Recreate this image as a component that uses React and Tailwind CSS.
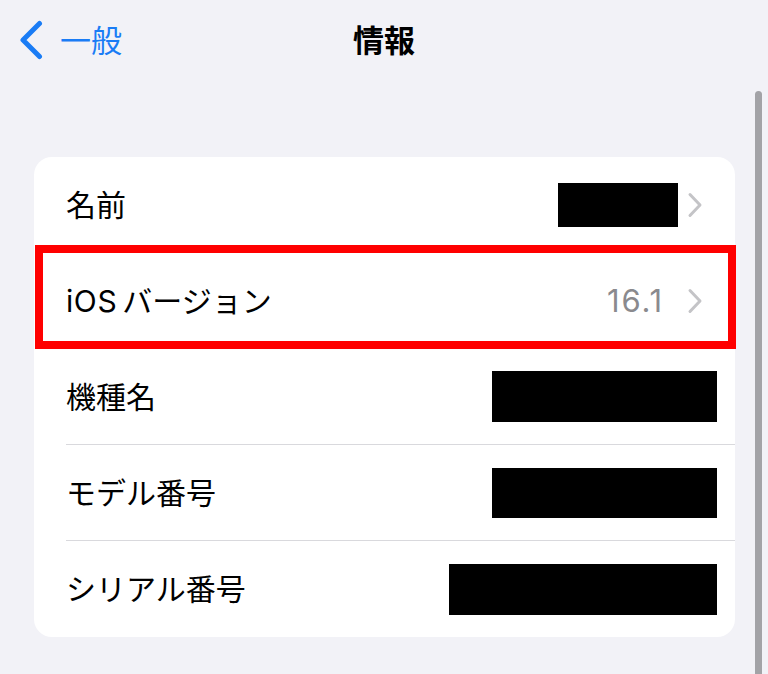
const font = { fontFamily: 'Inter, "Noto Sans CJK JP", sans-serif' };

function Chevron() {
  return (
    <svg width="16" height="26" viewBox="0 0 16 26" className="ml-[9px] mr-[14px] shrink-0">
      <path d="M3 2.5 L13 13 L3 23.5" fill="none" stroke="#c4c4c7" strokeWidth="3" strokeLinecap="round" strokeLinejoin="round" />
    </svg>
  );
}

function Row({ label, children, last }) {
  return (
    <div className="pl-8">
      <div className={"flex items-center h-[96px] pr-[18px] " + (last ? "" : "border-b border-[#d9d9dd]")}>
        <span className="text-[30px] leading-none text-black">{label}</span>
        <div className="ml-auto flex items-center">{children}</div>
      </div>
    </div>
  );
}

export default function App() {
  return (
    <div className="relative w-[768px] h-[674px] overflow-hidden bg-[#f2f2f7]" style={font}>
      <div className="relative h-20 flex items-center">
        <div className="flex items-center pl-[18px] text-[#1a7cf5]">
          <svg width="26" height="40" viewBox="0 0 26 40" className="shrink-0">
            <path d="M21.5 3.5 L5 20 L21.5 36.5" fill="none" stroke="#1a7cf5" strokeWidth="5" strokeLinecap="round" strokeLinejoin="round" />
          </svg>
          <span className="ml-[16px] text-[31px] leading-none">一般</span>
        </div>
        <div className="absolute inset-x-0 top-0 h-20 flex items-center justify-center pointer-events-none">
          <span className="text-[31px] font-bold leading-none text-black">情報</span>
        </div>
      </div>

      <div className="mt-[77px] ml-[34px] mr-[33px] bg-white rounded-[18px]">
        <Row label="名前">
          <div className="w-[120px] h-[44px] bg-black" />
          <Chevron />
        </Row>
        <div className="relative">
          <Row
            label={
              <>
                <span className="mr-[5px] tracking-[0.02em]">iOS</span>バージョン
              </>
            }
          >
            <span className="text-[31px] leading-none tracking-[0.06em] text-[#8a8a8e] mr-[14px]">16.1</span>
            <Chevron />
          </Row>
          <div className="absolute -top-2 bottom-0 left-px -right-px border-8 border-[#ff0000]" />
        </div>
        <Row label="機種名">
          <div className="w-[225px] h-[51px] bg-black" />
        </Row>
        <Row label="モデル番号">
          <div className="w-[225px] h-[50px] bg-black" />
        </Row>
        <Row label="シリアル番号" last>
          <div className="w-[268px] h-[51px] bg-black" />
        </Row>
      </div>

      <div className="absolute right-[6px] top-[91px] -bottom-2 w-[7px] rounded-full bg-[#a3a3a7]" />
    </div>
  );
}
